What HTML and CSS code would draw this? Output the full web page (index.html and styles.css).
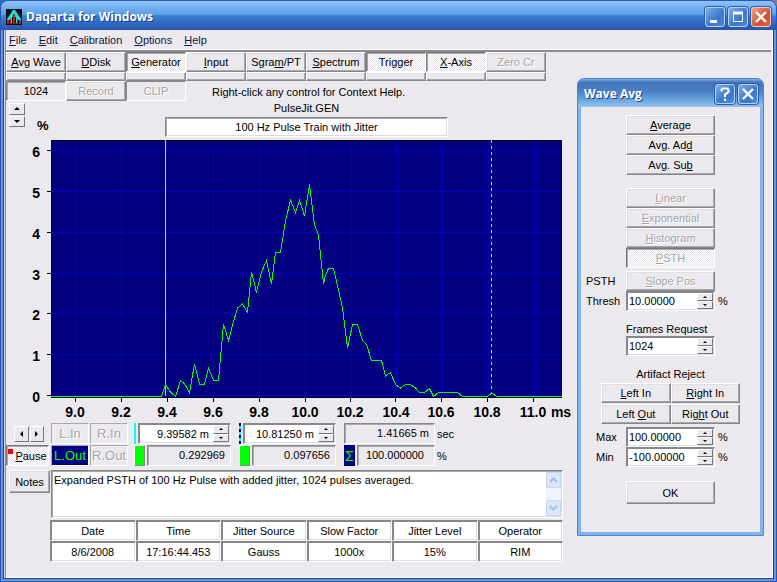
FILE: index.html
```html
<!DOCTYPE html>
<html lang="en">
<head>
    <meta charset="UTF-8">
    <meta name="viewport" content="width=device-width, initial-scale=1.0">
    <title>Daqarta for Windows</title>
    <link rel="stylesheet" href="styles.css">
</head>
<body>
    <div class="window">
        <header class="titlebar">
            <svg class="app-icon" width="16" height="16" viewBox="0 0 16 16" aria-hidden="true">
                <rect width="16" height="16" fill="#111"/>
                <path d="M1 12h14M1 14h14" stroke="#c01818" stroke-width="2" stroke-dasharray="2 1"/>
                <path d="M7 1h2l2 3 4 6v1h-3l-2-3H6l-2 3H1v-1l4-6z" fill="#18e0e0"/>
                <path d="M7 5h2v9H7z" fill="#c01818"/>
                <path d="M5 8h1v6H5zM10 8h1v6h-1z" fill="#18e0e0"/>
            </svg>
            <h1>Daqarta for Windows</h1>
            <div class="caption-buttons">
                <button class="caption-btn" aria-label="Minimize"><svg viewBox="0 0 18 18"><path d="M4 13.500h7" stroke="#fff" stroke-width="3"/></svg></button>
                <button class="caption-btn" aria-label="Maximize"><svg viewBox="0 0 18 18"><path d="M4.500 4v9.500h9V4" fill="none" stroke="#fff"/><path d="M4 5h10" stroke="#fff" stroke-width="3"/></svg></button>
                <button class="caption-btn close" aria-label="Close"><svg viewBox="0 0 18 18"><path d="M4 4l10 10M14 4L4 14" stroke="#fff" stroke-width="2.400"/></svg></button>
            </div>
        </header>

        <div class="client">
            <nav class="menubar">
                <a href="#"><u>F</u>ile</a>
                <a href="#"><u>E</u>dit</a>
                <a href="#"><u>C</u>alibration</a>
                <a href="#"><u>O</u>ptions</a>
                <a href="#"><u>H</u>elp</a>
            </nav>

            <main class="workspace">
                <div class="toolbar">
                    <button class="btn"><span><u>A</u>vg Wave</span></button>
                    <button class="btn"><span><u>D</u>Disk</span></button>
                    <button class="btn pressed"><span><u>G</u>enerator</span></button>
                    <button class="btn"><span><u>I</u>nput</span></button>
                    <button class="btn"><span>Sgra<u>m</u>/PT</span></button>
                    <button class="btn"><span><u>S</u>pectrum</span></button>
                    <button class="btn pressed"><span>Trigger</span></button>
                    <button class="btn pressed"><span><u>X</u>-Axis</span></button>
                    <button class="btn" disabled>Zero Cr</button>
                    <button class="btn strip" aria-label="Avg Wave options"></button>
                    <button class="btn strip" aria-label="DDisk options"></button>
                    <button class="btn strip" aria-label="Generator options"></button>
                    <button class="btn strip" aria-label="Input options"></button>
                    <button class="btn strip" aria-label="Sgram options"></button>
                    <button class="btn strip" aria-label="Spectrum options"></button>
                    <button class="btn strip" aria-label="Trigger options"></button>
                    <button class="btn strip" aria-label="X-Axis options"></button>
                    <button class="btn strip" aria-label="Zero options"></button>
                    <output class="sunken frames">1024</output>
                    <button class="btn" disabled>Record</button>
                    <output class="sunken clip">CLIP</output>
                    <p class="hint">Right-click any control for Context Help.</p>
                </div>

                <div class="plot-head">
                    <div class="y-scale">
                        <div class="spin tall">
                            <button class="up" aria-label="Increase Y range"></button>
                            <button class="down" aria-label="Decrease Y range"></button>
                        </div>
                        <b>%</b>
                    </div>
                    <div class="plot-title">
                        <label for="title">PulseJit.GEN</label>
                        <input id="title" type="text" value="100 Hz Pulse Train with Jitter">
                    </div>
                </div>

                <svg class="plot" viewBox="6 138 566 282" role="img" aria-label="Expanded PSTH histogram">
                    <rect x="51" y="140" width="511" height="258" fill="#000080"/>
                    <g class="grid">
                        <path d="M75.500 141V397M121.500 141V397M167.500 141V397M213.500 141V397M259.500 141V397M305.500 141V397M351.500 141V397M396.500 141V397M442.500 141V397M488.500 141V397M534.500 141V397"/>
                        <path d="M52 150.500H562M52 191.500H562M52 232.500H562M52 273.500H562M52 313.500H562M52 354.500H562M52 395.500H562"/>
                    </g>
                    <g class="axis">
                        <path d="M51 140.500H562M51.500 140V398M51 397.500H562"/>
                        <path d="M47 150.500H51M47 191.500H51M47 232.500H51M47 273.500H51M47 313.500H51M47 354.500H51M47 395.500H51"/>
                        <path d="M75.500 398V402M121.500 398V402M167.500 398V402M213.500 398V402M259.500 398V402M305.500 398V402M350.500 398V402M395.500 398V402M441.500 398V402M487.500 398V402M533.500 398V402"/>
                    </g>
                    <path class="cursor" d="M165.500 140V396"/>
                    <path class="cursor" d="M491.500 140V394" stroke-dasharray="3 3"/>
                    <polyline class="trace" points="51,396.500 161.500,396.500 165.500,384.500 169.500,391 172.500,394 175.500,396.500 180.500,380.500 184.500,384 189.500,392.500 194.500,364 199.500,384 204.500,384 208.500,368 213.500,380.500 218.500,380.500 223.500,324 228.500,340.500 232.500,325 237.500,308 242.500,304 247.500,312.500 251.500,272 256.500,292.500 261.500,272 266.500,260.500 271.500,284 275.500,252.500 280.500,252.500 285.500,221 290.500,200 295.500,212.500 299.500,200.500 304.500,216 309.500,184.500 314.500,225 318.500,235 323.500,284 325.500,275 328.500,268.500 333.500,268.500 338.500,290 342.500,308 347.500,348 352.500,324.500 357.500,324.500 362.500,340.500 366.500,344.500 371.500,360.500 381.500,360.500 385.500,376 390.500,372.500 395.500,384.500 400.500,388 405.500,384.500 410.500,384.500 415.500,388 419.500,392.500 424.500,392.500 429.500,388.500 433.500,396.500 438.500,392.500 457.500,392.500 462.500,396.500 487.500,396.500 491.500,393 496.500,396.500 562,396.500"/>
                    <g class="y-labels">
                        <text x="40" y="157">6</text>
                        <text x="40" y="198">5</text>
                        <text x="40" y="239">4</text>
                        <text x="40" y="280">3</text>
                        <text x="40" y="320">2</text>
                        <text x="40" y="361">1</text>
                        <text x="40" y="402">0</text>
                    </g>
                    <g class="x-labels">
                        <text x="75" y="417">9.0</text>
                        <text x="121" y="417">9.2</text>
                        <text x="167" y="417">9.4</text>
                        <text x="213" y="417">9.6</text>
                        <text x="259" y="417">9.8</text>
                        <text x="305" y="417">10.0</text>
                        <text x="350" y="417">10.2</text>
                        <text x="396" y="417">10.4</text>
                        <text x="441" y="417">10.6</text>
                        <text x="487" y="417">10.8</text>
                        <text x="533" y="417">11.0</text>
                        <text x="561" y="417">ms</text>
                    </g>
                </svg>

                <div class="readouts">
                    <div class="scroll-x">
                        <button class="left" aria-label="Scroll left"></button>
                        <button class="right" aria-label="Scroll right"></button>
                    </div>
                    <div class="channels">
                        <button class="channel" disabled>L.In</button>
                        <button class="channel" disabled>R.In</button>
                    </div>
                    <div class="field">
                        <i class="mark solid"></i>
                        <div class="spinbox">
                            <input type="text" value="9.39582 m" aria-label="Cursor 1 position">
                            <div class="spin">
                                <button class="up" aria-label="Cursor 1 up"></button>
                                <button class="down" aria-label="Cursor 1 down"></button>
                            </div>
                        </div>
                    </div>
                    <div class="field">
                        <i class="mark dashed"></i>
                        <div class="spinbox">
                            <input type="text" value="10.81250 m" aria-label="Cursor 2 position">
                            <div class="spin">
                                <button class="up" aria-label="Cursor 2 up"></button>
                                <button class="down" aria-label="Cursor 2 down"></button>
                            </div>
                        </div>
                    </div>
                    <output class="sunken value">1.41665 m</output>
                    <span class="unit">sec</span>

                    <button class="btn pressed pause"><i></i><span><u>P</u>ause</span></button>
                    <div class="channels">
                        <button class="channel on">L.Out</button>
                        <button class="channel" disabled>R.Out</button>
                    </div>
                    <div class="field">
                        <button class="led" aria-label="Cursor 1 trace"></button>
                        <output class="sunken value">0.292969</output>
                    </div>
                    <div class="field">
                        <button class="led" aria-label="Cursor 2 trace"></button>
                        <output class="sunken value">0.097656</output>
                    </div>
                    <div class="field total">
                        <button class="sigma">Σ</button>
                        <output class="sunken value">100.000000</output>
                    </div>
                    <span class="unit">%</span>
                </div>

                <div class="notes">
                    <button class="btn notes-btn">Notes</button>
                    <div class="notes-box">
                        <textarea aria-label="Notes">Expanded PSTH of 100 Hz Pulse with added jitter, 1024 pulses averaged.</textarea>
                        <div class="scrollbar">
                            <button aria-label="Scroll up" disabled><svg viewBox="0 0 13 14"><path d="M3 9l3.500-3.500L10 9"/></svg></button>
                            <button aria-label="Scroll down" disabled><svg viewBox="0 0 13 14"><path d="M3 5l3.500 3.500L10 5"/></svg></button>
                        </div>
                    </div>
                </div>

                <table class="info">
                    <tr><th>Date</th><th>Time</th><th>Jitter Source</th><th>Slow Factor</th><th>Jitter Level</th><th>Operator</th></tr>
                    <tr><td>8/6/2008</td><td>17:16:44.453</td><td>Gauss</td><td>1000x</td><td>15%</td><td>RIM</td></tr>
                </table>
            </main>
        </div>

        <section class="dialog" role="dialog" aria-labelledby="dialog-title">
            <header class="dialog-title">
                <h2 id="dialog-title">Wave Avg</h2>
                <div class="caption-buttons">
                    <button class="caption-btn" aria-label="Help"><svg viewBox="0 0 18 18"><path d="M5.500 6.500V5l1-1.500h5L12.500 5v2L9 9.500V12M9 13.500V16" fill="none" stroke="#fff" stroke-width="2.200"/></svg></button>
                    <button class="caption-btn" aria-label="Close"><svg viewBox="0 0 18 18"><path d="M4 4l10 10M14 4L4 14" stroke="#fff" stroke-width="2.400"/></svg></button>
                </div>
            </header>
            <div class="dialog-body">
                <div class="stack">
                    <button class="btn"><span><u>A</u>verage</span></button>
                    <button class="btn"><span>Avg. Ad<u>d</u></span></button>
                    <button class="btn"><span>Avg. Su<u>b</u></span></button>
                </div>
                <div class="stack">
                    <button class="btn" disabled><span><u>L</u>inear</span></button>
                    <button class="btn" disabled><span><u>E</u>xponential</span></button>
                    <button class="btn" disabled><span><u>H</u>istogram</span></button>
                    <button class="btn pressed" disabled><span><u>P</u>STH</span></button>
                </div>
                <div class="form">
                    <span>PSTH</span>
                    <button class="btn" disabled><span><u>S</u>lope Pos</span></button>
                    <span></span>
                    <label for="thresh">Thresh</label>
                    <div class="spinbox">
                        <input id="thresh" type="text" value="10.00000">
                        <div class="spin">
                            <button class="up" aria-label="Threshold up"></button>
                            <button class="down" aria-label="Threshold down"></button>
                        </div>
                    </div>
                    <span>%</span>
                </div>
                <div class="frames-request">
                    <label for="frames">Frames Request</label>
                    <div class="spinbox">
                        <input id="frames" type="text" value="1024">
                        <div class="spin">
                            <button class="up" aria-label="Frames up"></button>
                            <button class="down" aria-label="Frames down"></button>
                        </div>
                    </div>
                </div>
                <div class="reject">
                    <h3>Artifact Reject</h3>
                    <div class="reject-grid">
                        <button class="btn"><span><u>L</u>eft In</span></button>
                        <button class="btn"><span><u>R</u>ight In</span></button>
                        <button class="btn"><span>Left <u>O</u>ut</span></button>
                        <button class="btn"><span>Rig<u>h</u>t Out</span></button>
                    </div>
                </div>
                <div class="form limits">
                    <label for="max">Max</label>
                    <div class="spinbox">
                        <input id="max" type="text" value="100.00000">
                        <div class="spin">
                            <button class="up" aria-label="Max up"></button>
                            <button class="down" aria-label="Max down"></button>
                        </div>
                    </div>
                    <span>%</span>
                    <label for="min">Min</label>
                    <div class="spinbox">
                        <input id="min" type="text" value="-100.00000">
                        <div class="spin">
                            <button class="up" aria-label="Min up"></button>
                            <button class="down" aria-label="Min down"></button>
                        </div>
                    </div>
                    <span>%</span>
                </div>
                <button class="btn ok">OK</button>
            </div>
        </section>
    </div>
</body>
</html>
```
FILE: styles.css
```css
* {
    box-sizing: border-box;
}
body {
    margin: 0;
    background: linear-gradient(90deg, #2a6fc0 50%, #808080 50%);
    font-family: "Liberation Sans", Arial, sans-serif;
    font-size: 11px;
    line-height: 14px;
    color: #000;
}
button, input, textarea {
    font: inherit;
    color: inherit;
    margin: 0;
    padding: 0;
    border-radius: 0;
}
h1, h2, h3, p {
    margin: 0;
    font-size: 11px;
    font-weight: normal;
}
input {
    min-width: 0;
    width: 100%;
    border: 0;
    background: none;
    outline: 0;
}

/* main window */
.window {
    position: relative;
    display: flex;
    flex-direction: column;
    min-height: 100vh;
    padding: 0 2px 2px;
    border: 1px solid #2f55b4;
    border-radius: 8px 8px 0 0;
    background: #6296dc;
    overflow: hidden;
}
.titlebar {
    display: flex;
    align-items: center;
    gap: 4px;
    height: 29px;
    margin: 0 -2px;
    padding: 3px 5px 0;
    background: linear-gradient(#8cc4f6, #78b2f0 20%, #5c9ee6 45%, #3c7ed2 52%, #2f6cc4 75%, #2a52ae);
}
.titlebar h1, .dialog-title h2 {
    flex: 1;
    font-family: "Open Sans", "Noto Sans", sans-serif;
    font-size: 12px;
    font-weight: bold;
    line-height: 18px;
    color: #fff;
    text-shadow: 1px 1px #1d3f8c;
}
.caption-buttons {
    display: flex;
    gap: 3px;
}
.caption-btn {
    width: 20px;
    height: 20px;
    border: 1px solid #b6d2f4;
    border-radius: 3px;
    background: linear-gradient(135deg, #7eaeea, #3a76cc 60%, #4b8ade);
    box-shadow: 0 0 0 1px #2a5cb4;
}
.caption-btn svg {
    display: block;
    width: 18px;
    height: 18px;
}
.caption-btn.close {
    border-color: #f0c8c0;
    background: linear-gradient(135deg, #eda28c, #d4502c 60%, #dc6440);
}
.client {
    flex: 1;
    border: 1px solid #22408c;
    border-top: 0;
    background: #ebe9ed;
    box-shadow: inset 1px 0 #d8d6da, inset 2px 0 #8c8c90, inset -1px -1px #fff;
}
.menubar {
    display: flex;
    gap: 12px;
    height: 22px;
    margin: 0 2px;
    padding: 3px 3px 0;
    border-bottom: 2px solid #8c8c90;
    box-shadow: inset 0 -1px #fff;
}
.menubar a {
    color: #14143c;
    text-decoration: none;
}

/* shared controls */
.btn {
    display: flex;
    align-items: center;
    justify-content: center;
    min-width: 0;
    height: 20px;
    border: 1px solid;
    border-color: #fff #87878b #87878b #fff;
    background: #ebe9ed;
    box-shadow: inset -1px -1px #a9a9ad, inset 1px 1px #dfdfe3;
    white-space: nowrap;
}
.btn:disabled, .channel:disabled, .clip {
    color: #a6a5a9;
    text-shadow: 1px 1px #fff;
}
.btn.pressed {
    border-color: #77777b #fff #fff #77777b;
    background: repeating-conic-gradient(#fff 0 25%, #e6e4e8 0 50%) 0 0 / 2px 2px;
    box-shadow: inset 1px 1px #a9a9ad;
}
.sunken {
    border: 1px solid;
    border-color: #87878b #fff #fff #87878b;
    background: #ebe9ed;
    box-shadow: inset 1px 1px #a9a9ad;
}
.spinbox {
    display: flex;
    min-width: 0;
    height: 20px;
    padding: 1px;
    border: 1px solid;
    border-color: #87878b #fff #fff #87878b;
    background: #fff;
    box-shadow: inset 1px 1px #87878b, inset -1px -1px #dcdce0;
}
.spin {
    display: flex;
    flex-direction: column;
    flex: 0 0 16px;
}
.spin button, .scroll-x button {
    display: flex;
    flex: 1;
    align-items: center;
    justify-content: center;
    border: 1px solid;
    border-color: #fff #77777b #77777b #fff;
    background: #ebe9ed;
}
.spin.tall {
    width: 16px;
    height: 24px;
    gap: 1px;
}
.up::after, .down::after, .left::after, .right::after {
    content: "";
    border: 2px solid transparent;
}
.up::after {
    border-top: 0;
    border-bottom-color: #000;
}
.down::after {
    border-bottom: 0;
    border-top-color: #000;
}
.tall .up::after, .tall .down::after {
    border-width: 3px;
}
.tall .up::after {
    border-top: 0;
}
.tall .down::after {
    border-bottom: 0;
}
.left::after, .right::after {
    border-width: 3px;
}
.left::after {
    border-left: 0;
    border-right-color: #000;
}
.right::after {
    border-right: 0;
    border-left-color: #000;
}

/* toolbar */
.workspace {
    margin: 0 201px 0 2px;
}
.toolbar {
    display: grid;
    grid-template-columns: repeat(9, 1fr);
    grid-template-rows: 20px 9px 20px;
    margin-right: 26px;
}
.toolbar .btn {
    height: auto;
}
.toolbar .sunken {
    display: flex;
    align-items: center;
    justify-content: center;
}
.toolbar .clip {
    box-shadow: none;
}
.hint {
    grid-column: 4 / -1;
    padding: 4px 0 0 26px;
}

/* plot */
.plot-head {
    display: grid;
    grid-template-columns: 159px 1fr 124px;
    height: 37px;
}
.y-scale {
    display: flex;
    gap: 12px;
    padding: 2px 0 5px 3px;
}
.y-scale b {
    align-self: flex-end;
    font-size: 13px;
}
.plot-title {
    display: flex;
    flex-direction: column;
    text-align: center;
}
.plot-title label {
    height: 16px;
}
.plot-title input {
    height: 20px;
    border: 1px solid;
    border-color: #87878b #fff #fff #87878b;
    background: #fff;
    box-shadow: inset 1px 1px #a9a9ad, inset -1px -1px #dcdce0;
    text-align: center;
}
.plot {
    display: block;
    width: 100%;
    height: auto;
}
.plot path, .plot polyline {
    fill: none;
    shape-rendering: crispEdges;
}
.grid {
    stroke: #0000c0;
}
.axis {
    stroke: #000;
}
.cursor {
    stroke: #40ffff;
}
.trace {
    stroke: #00ff00;
}
.plot text {
    font-size: 14px;
    font-weight: bold;
}
.x-labels {
    text-anchor: middle;
}
.y-labels {
    text-anchor: end;
}

/* cursor readouts */
.readouts {
    display: grid;
    grid-template-columns: 43px 81px 103px 103px 91px 1fr;
    grid-template-rows: 21px 21px;
    column-gap: 2px;
    row-gap: 1px;
    padding: 3px 0 0;
}
.readouts > * {
    min-width: 0;
}
.scroll-x {
    display: flex;
    gap: 1px;
    padding: 3px 5px 2px 8px;
}
.channels {
    display: grid;
    grid-template-columns: 1fr 1fr;
    gap: 1px;
    padding-right: 4px;
}
.channel {
    border: 1px solid;
    border-color: #a9a9ad #fff #fff #a9a9ad;
    background: #ebe9ed;
    font-size: 13px;
}
.channel.on {
    background: #000080;
    color: #00ff00;
}
.field {
    display: flex;
    gap: 2px;
    padding-right: 6px;
}
.field.total {
    padding-right: 0;
}
.field .spinbox, .field .value {
    flex: 1;
    height: 21px;
}
.field input {
    padding-right: 4px;
    text-align: right;
}
.mark {
    width: 2px;
    background: #00ffff;
}
.mark.dashed {
    background: repeating-linear-gradient(#000080 0 3px, #00ffff 3px 6px);
}
.led {
    width: 11px;
    border: 1px solid;
    border-color: #fff #87878b #87878b #fff;
    background: #00ff00;
}
.sigma {
    width: 11px;
    border: 0;
    background: #000080;
    color: #00ff00;
    font-size: 14px;
}
.value {
    padding: 2px 5px 0 0;
    text-align: right;
}
.total .value {
    padding-right: 10px;
}
.unit {
    padding-top: 4px;
}
.btn.pause {
    height: 21px;
    gap: 2px;
}
.pause i {
    align-self: flex-start;
    width: 5px;
    height: 5px;
    margin-top: 3px;
    background: #f00;
}

/* notes and info table */
.notes {
    display: flex;
    gap: 1px;
    margin-top: 4px;
    padding: 0 9px 0 3px;
}
.btn.notes-btn {
    width: 41px;
    height: 23px;
}
.notes-box {
    display: flex;
    flex: 1;
    height: 48px;
    padding: 1px;
    border: 1px solid;
    border-color: #87878b #fff #fff #87878b;
    background: #fff;
    box-shadow: inset 1px 1px #a9a9ad, inset -1px -1px #dcdce0;
}
.notes textarea {
    flex: 1;
    padding: 1px;
    border: 0;
    outline: 0;
    resize: none;
    overflow: hidden;
}
.scrollbar {
    display: flex;
    flex-direction: column;
    justify-content: space-between;
    width: 15px;
    background: #eef3fc;
}
.scrollbar button {
    height: 16px;
    border: 1px solid #c4d6f4;
    border-radius: 2px;
    background: #dae6fa;
}
.scrollbar svg {
    display: block;
    width: 13px;
    height: 14px;
}
.scrollbar path {
    fill: none;
    stroke: #a8bede;
    stroke-width: 2;
}
.info {
    width: calc(100% - 53px);
    margin: 2px 0 14px 44px;
    border-spacing: 0;
    table-layout: fixed;
    text-align: center;
}
.info th, .info td {
    height: 21px;
    padding: 0;
    border: 1px solid;
    border-color: #87878b #fff #fff #87878b;
    background: #fff;
    box-shadow: inset 1px 1px #87878b, inset -1px -1px #dcdce0;
    font-weight: normal;
}

/* floating dialog */
.dialog {
    position: absolute;
    top: 77px;
    right: 12px;
    width: 187px;
    padding: 0 3px 3px;
    border: 1px solid #4a86dc;
    border-radius: 7px 7px 0 0;
    background: #7fb2ee;
}
.dialog-title {
    display: flex;
    align-items: center;
    height: 28px;
    margin: 0 -3px;
    padding: 1px 5px 0 6px;
    border-radius: 6px 6px 0 0;
    background: linear-gradient(#7fb0ea, #4472b8 12%, #4a80c6 45%, #6ea6de 75%, #92c4ec);
}
.dialog-body {
    display: flex;
    flex-direction: column;
    padding: 8px 20px 28px;
    background: #ebe9ed;
}
.stack {
    display: flex;
    flex-direction: column;
    width: 89px;
    margin: 0 auto 13px;
}
.stack + .stack {
    margin-bottom: 3px;
}
.form {
    display: grid;
    grid-template-columns: 40px 89px 1fr;
    align-items: center;
    margin: 0 -15px;
}
.form > :nth-child(3n) {
    padding-left: 3px;
}
.dialog .spinbox input {
    padding-left: 1px;
}
.frames-request {
    width: 89px;
    margin: 11px auto;
}
.frames-request label {
    white-space: nowrap;
}
.reject h3 {
    margin-bottom: 2px;
    text-align: center;
    line-height: 14px;
}
.reject-grid {
    display: grid;
    grid-template-columns: 1fr 1fr;
    row-gap: 1px;
}
.limits {
    margin-top: 3px;
}
.limits label {
    padding-left: 10px;
}
.btn.ok {
    width: 89px;
    height: 23px;
    margin: 14px auto 0;
}
```
